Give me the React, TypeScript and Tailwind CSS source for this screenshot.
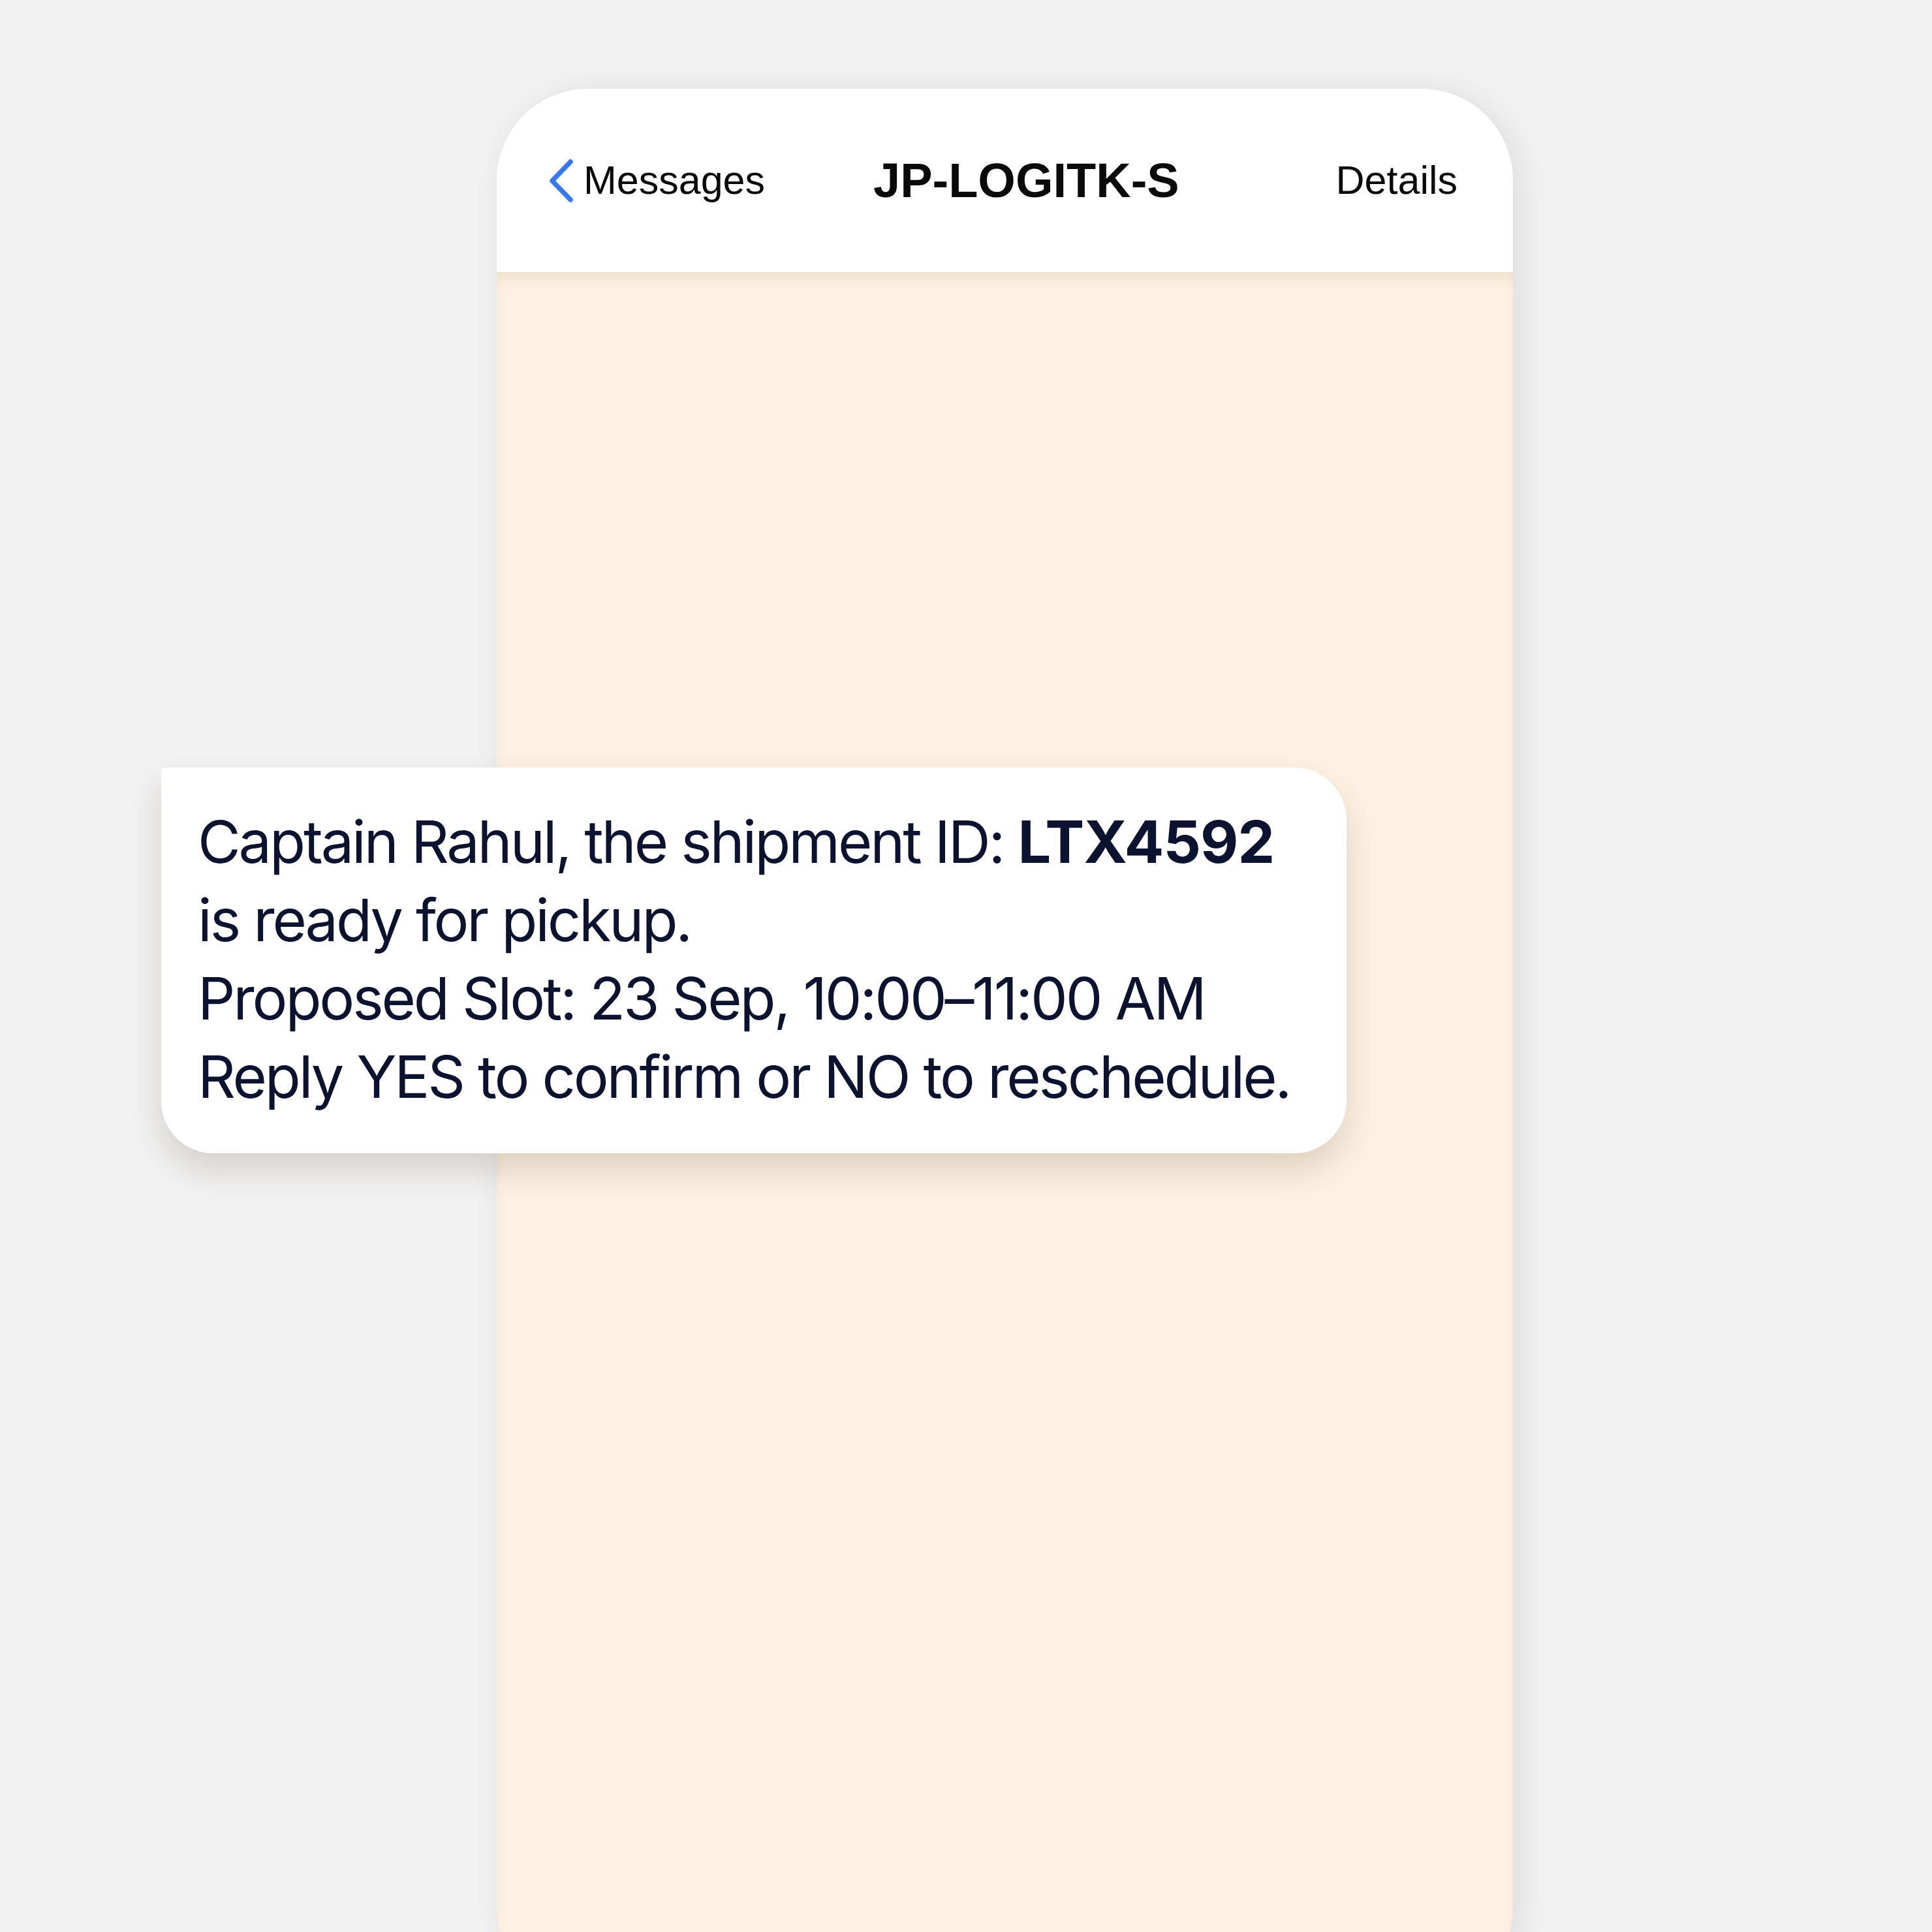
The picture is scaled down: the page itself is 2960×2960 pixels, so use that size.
import { ReactNode } from 'react'

function BackChevron() {
  return (
    <svg width="40" height="66" viewBox="0 0 40 66" fill="none" className="shrink-0">
      <path d="M34 4 L6 33 L34 62" stroke="#3478f6" strokeWidth="7.5" strokeLinecap="round" strokeLinejoin="round" />
    </svg>
  )
}

function Line({ children }: { children: ReactNode }) {
  return <div className="whitespace-nowrap">{children}</div>
}

export default function App() {
  return (
    <div className="w-[2960px] h-[2960px] overflow-hidden bg-[#f2f2f2] pt-[136px] pl-[761px]">
      {/* Phone */}
      <div className="w-[1557px] h-[2930px] rounded-[140px] bg-[#fdf2e2] flex flex-col shadow-[10px_4px_50px_rgba(0,0,0,0.09)]">
        {/* Header */}
        <div className="h-[281px] shrink-0 bg-white rounded-t-[140px] flex items-center pl-[79px] pr-[85px] font-['Liberation_Sans',Arial,sans-serif] text-[#0a0a0a]">
          <div className="flex items-center gap-[14px]">
            <BackChevron />
            <span className="text-[61px] leading-none">Messages</span>
          </div>
          <span className="ml-[166px] text-[74px] font-bold leading-none">JP-LOGITK-S</span>
          <span className="ml-auto text-[61px] leading-none">Details</span>
        </div>

        {/* Chat area */}
        <div className="flex-1 rounded-b-[140px] pt-[759px] shadow-[inset_0_16px_26px_-10px_rgba(140,110,60,0.18)]">
          <div className="-ml-[514px] w-[1816px] bg-white rounded-[80px] rounded-tl-[6px] pl-[56px] pt-[54px] pb-[57px] shadow-[0_26px_50px_rgba(60,40,10,0.16)] font-['Inter',sans-serif] text-[90px] leading-[120px] tracking-[-0.035em] text-[#0c1330]">
            <Line>
              Captain Rahul, the shipment ID: <span className="font-bold tracking-[-0.01em]">LTX4592</span>
            </Line>
            <Line>is ready for pickup.</Line>
            <Line>Proposed Slot: 23 Sep, 10:00–11:00 AM</Line>
            <Line>Reply YES to confirm or NO to reschedule.</Line>
          </div>
        </div>
      </div>
    </div>
  )
}
